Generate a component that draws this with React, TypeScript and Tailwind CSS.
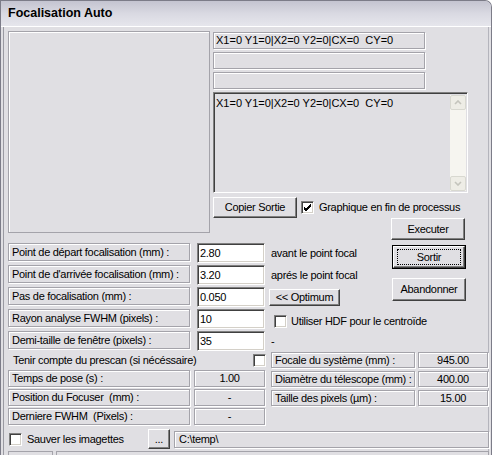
import React from 'react';

const etched = 'border border-[#a4a3aa] shadow-[inset_1px_1px_0_#fff,1px_1px_0_#fff]';
const sunken =
  'bg-white border border-t-[#808080] border-l-[#808080] border-b-white border-r-white shadow-[inset_1px_1px_0_#404040,inset_-1px_-1px_0_#d4d0c8]';
const raised =
  'bg-[#e0dfe3] border border-t-white border-l-white border-b-[#404040] border-r-[#404040] shadow-[inset_-1px_-1px_0_#808080] flex items-center justify-center';

function Check({ checked = false }: { checked?: boolean }) {
  return (
    <div className={`w-[13px] h-[13px] shrink-0 ${sunken} flex items-center justify-center`}>
      {checked && (
        <svg width="9" height="9" viewBox="0 0 9 9">
          <path d="M1 4 L3 6 L8 1 M1 5 L3 7 L8 2 M1 6 L3 8 L8 3" stroke="#000" strokeWidth="1" fill="none" />
        </svg>
      )}
    </div>
  );
}

function InputRow({ label, value }: { label: string; value: string }) {
  return (
    <div className="flex h-[20px] items-start gap-[7px]">
      <div className={`w-[182px] h-[18px] ${etched} pl-[3px] flex items-center`}>{label}</div>
      <div className={`w-[68px] h-[20px] ${sunken} pl-[2px] flex items-center`}>{value}</div>
    </div>
  );
}

function InfoRow({ label, value, lw, vw, h, gap }: { label: string; value: string; lw: string; vw: string; h: string; gap: string }) {
  return (
    <div className={`flex ${h} ${gap}`}>
      <div className={`${lw} h-full ${etched} pl-[3px] flex items-center whitespace-pre`}>{label}</div>
      <div className={`${vw} h-full ${etched} flex items-center justify-center`}>{value}</div>
    </div>
  );
}

export default function App() {
  return (
    <div className="w-[496px] h-[455px] bg-white overflow-hidden font-['Liberation_Sans',Arial,sans-serif] text-[11px] tracking-[-0.3px] text-black leading-none whitespace-nowrap">
      <div className="w-[492px] h-[455px] flex flex-col bg-[#e0dfe3] border-l border-r border-t border-[#7c7c88] rounded-tr-[7px] overflow-hidden">
        {/* title bar */}
        <div className="h-[26px] shrink-0 border-b border-white bg-gradient-to-b from-[#c4c4d0] via-[#d9d9e2] to-[#e6e6ec] flex items-center pl-[7px]">
          <span className="text-[12.5px] font-bold tracking-normal">Focalisation Auto</span>
        </div>

        {/* body */}
        <div className="flex-1 flex flex-col pl-[7px] pr-[2px] pt-[4px] shadow-[inset_2px_0_0_#e0dfe3,inset_3px_0_0_#9a9aa2,inset_-2px_0_0_#e0dfe3,inset_-3px_0_0_#b4b4bc]">
          {/* graph + output */}
          <div className="flex gap-[3px] h-[209px]">
            <div className="w-[202px] h-[202px] border border-[#a4a3aa] shadow-[inset_1px_1px_0_#fff]" />
            <div className="w-[255px] flex flex-col pt-[1px]">
              <div className="flex flex-col gap-[3px]">
                <div className={`w-[212px] h-[17px] ${etched} pl-[2px] flex items-center tracking-normal`}>X1=0 Y1=0|X2=0 Y2=0|CX=0&nbsp;&nbsp;CY=0</div>
                <div className={`w-[212px] h-[17px] ${etched}`} />
                <div className={`w-[212px] h-[17px] ${etched}`} />
                <div className="h-[101px] flex border border-t-[#808080] border-l-[#808080] border-b-white border-r-white shadow-[inset_1px_1px_0_#404040]">
                  <div className="flex-1 pl-[2px] pt-[5px] tracking-normal">X1=0 Y1=0|X2=0 Y2=0|CX=0&nbsp;&nbsp;CY=0</div>
                  <div className="w-[16px] mt-[2px] mb-[1px] mr-[1px] bg-[#f6f5f0] flex flex-col justify-between">
                    <div className="h-[15px] bg-[#eeede6] border border-[#d8d8d0] rounded-[2px] flex items-center justify-center">
                      <svg width="8" height="5" viewBox="0 0 8 5"><path d="M1 4 L4 1 L7 4" stroke="#c4c4bc" strokeWidth="1.6" fill="none" /></svg>
                    </div>
                    <div className="h-[15px] bg-[#eeede6] border border-[#d8d8d0] rounded-[2px] flex items-center justify-center">
                      <svg width="8" height="5" viewBox="0 0 8 5"><path d="M1 1 L4 4 L7 1" stroke="#c4c4bc" strokeWidth="1.6" fill="none" /></svg>
                    </div>
                  </div>
                </div>
              </div>
              <div className="mt-[4px] h-[21px] flex items-center">
                <div className={`w-[84px] h-[21px] ${raised}`}>Copier Sortie</div>
                <div className="ml-[4px]"><Check checked /></div>
                <span className="ml-[5px]">Graphique en fin de processus</span>
              </div>
              <div className="h-[22px] flex justify-end pr-[3px]">
                <div className={`w-[74px] h-[22px] ${raised}`}>Executer</div>
              </div>
            </div>
          </div>

          {/* parameters */}
          <div className="mt-[3px] flex">
            <div className="w-[258px] flex flex-col gap-[2px]">
              <InputRow label="Point de départ focalisation (mm) :" value="2.80" />
              <InputRow label="Point de d'arrivée focalisation (mm) :" value="3.20" />
              <InputRow label="Pas de focalisation (mm) :" value="0.050" />
              <InputRow label="Rayon analyse FWHM (pixels) :" value="10" />
              <InputRow label="Demi-taille de fenêtre (pixels) :" value="35" />
            </div>
            <div className="ml-[3px] w-[123px] flex flex-col gap-[2px]">
              <div className="h-[20px] flex items-center pl-[2px]">avant le point focal</div>
              <div className="h-[20px] flex items-center pl-[2px]">aprés le point focal</div>
              <div className="h-[20px] flex items-center">
                <div className={`w-[71px] h-[17px] ${raised}`}>&lt;&lt; Optimum</div>
              </div>
              <div className="h-[20px] flex items-center pl-[5px] pt-[4px] gap-[4px]">
                <Check />
                <span>Utiliser HDF pour le centroïde</span>
              </div>
              <div className="h-[20px] flex items-center pl-[2px]">-</div>
            </div>
            <div className="w-[74px] flex flex-col">
              <div className="mt-[2px] h-[24px] border border-black">
                <div className={`h-full ${raised}`}>
                  <div className="w-[64px] h-[16px] border border-dotted border-black flex items-center justify-center">Sortir</div>
                </div>
              </div>
              <div className={`mt-[9px] h-[23px] ${raised}`}>Abandonner</div>
            </div>
          </div>

          {/* telescope info */}
          <div className="mt-[1px] flex">
            <div className="w-[258px] flex flex-col">
              <div className="h-[17px] flex items-center justify-between pl-[5px]">
                <span>Tenir compte du prescan (si nécéssaire)</span>
                <Check />
              </div>
              <div className="mt-[1px] flex flex-col gap-[2px]">
                <InfoRow label="Temps de pose (s) :" value="1.00" lw="w-[182px]" vw="w-[71px]" h="h-[17px]" gap="gap-[4px]" />
                <InfoRow label="Position du Focuser  (mm) :" value="-" lw="w-[182px]" vw="w-[71px]" h="h-[17px]" gap="gap-[4px]" />
                <InfoRow label="Derniere FWHM  (Pixels) :" value="-" lw="w-[182px]" vw="w-[71px]" h="h-[17px]" gap="gap-[4px]" />
              </div>
            </div>
            <div className="ml-[5px] w-[217px] flex flex-col gap-[3px]">
              <InfoRow label="Focale du système (mm) :" value="945.00" lw="w-[144px]" vw="w-[70px]" h="h-[16px]" gap="gap-[3px]" />
              <InfoRow label="Diamètre du télescope (mm) :" value="400.00" lw="w-[144px]" vw="w-[70px]" h="h-[16px]" gap="gap-[3px]" />
              <InfoRow label="Taille des pixels (µm) :" value="15.00" lw="w-[144px]" vw="w-[70px]" h="h-[16px]" gap="gap-[3px]" />
            </div>
          </div>

          {/* save row */}
          <div className="mt-[3px] h-[22px] flex items-center">
            <div className="w-[140px] flex items-center gap-[5px] pl-[1px]">
              <Check />
              <span>Sauver les imagettes</span>
            </div>
            <div className={`w-[22px] h-[20px] ${raised} items-end pb-[3px]`}>...</div>
            <div className={`ml-[4px] flex-1 h-[17px] ${etched} pl-[4px] flex items-center`}>C:\temp\</div>
          </div>

          {/* status strip */}
          <div className="mt-[1px] flex-1 flex gap-[3px]">
            <div className="w-[45px] border-t border-l border-r border-[#a4a3aa]" />
            <div className="flex-1 border-t border-l border-r border-[#a4a3aa]" />
          </div>
        </div>
      </div>
    </div>
  );
}
